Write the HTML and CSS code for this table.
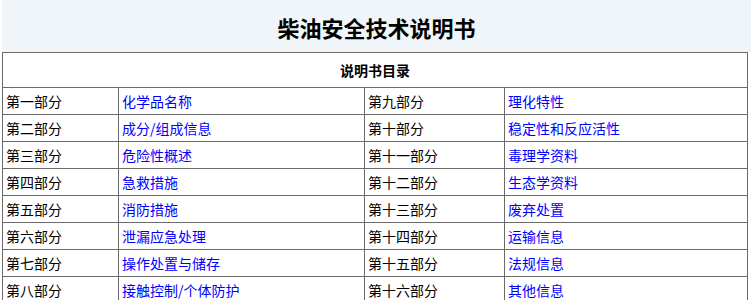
FILE: index.html
```html
<!DOCTYPE html>
<html lang="zh-CN">
<head>
<meta charset="utf-8">
<title>柴油安全技术说明书</title>
<link rel="stylesheet" href="styles.css">
</head>
<body>
<div class="page">
  <header class="title-bar">
    <h1 class="title">柴油安全技术说明书</h1>
  </header>
  <table class="toc">
    <colgroup>
      <col class="c1"><col class="c2"><col class="c3"><col class="c4">
    </colgroup>
    <tr class="toc-head"><th colspan="4">说明书目录</th></tr>
    <tr><td>第一部分</td><td><a href="#">化学品名称</a></td><td>第九部分</td><td><a href="#">理化特性</a></td></tr>
    <tr><td>第二部分</td><td><a href="#">成分/组成信息</a></td><td>第十部分</td><td><a href="#">稳定性和反应活性</a></td></tr>
    <tr><td>第三部分</td><td><a href="#">危险性概述</a></td><td>第十一部分</td><td><a href="#">毒理学资料</a></td></tr>
    <tr><td>第四部分</td><td><a href="#">急救措施</a></td><td>第十二部分</td><td><a href="#">生态学资料</a></td></tr>
    <tr><td>第五部分</td><td><a href="#">消防措施</a></td><td>第十三部分</td><td><a href="#">废弃处置</a></td></tr>
    <tr><td>第六部分</td><td><a href="#">泄漏应急处理</a></td><td>第十四部分</td><td><a href="#">运输信息</a></td></tr>
    <tr><td>第七部分</td><td><a href="#">操作处置与储存</a></td><td>第十五部分</td><td><a href="#">法规信息</a></td></tr>
    <tr><td>第八部分</td><td><a href="#">接触控制/个体防护</a></td><td>第十六部分</td><td><a href="#">其他信息</a></td></tr>
  </table>
</div>
</body>
</html>
```
FILE: styles.css
```css
html, body {
  margin: 0;
  padding: 0;
  background: #ffffff;
}
body {
  font-family: "Noto Sans CJK SC", "Noto Sans", sans-serif;
  color: #000;
}
.page {
  padding-left: 2px;
}
.title-bar {
  background: #eff5f8;
  height: 52px;
  display: flex;
  align-items: center;
  justify-content: center;
}
.title {
  margin: 0;
  font-size: 22px;
  font-weight: 700;
  line-height: 1;
  padding-top: 1px;
  color: #000;
}
.toc {
  border-collapse: collapse;
  width: 745px;
  table-layout: fixed;
  font-size: 14px;
}
.c1 { width: 116px; }
.c2 { width: 246px; }
.c3 { width: 140px; }
.c4 { width: 243px; }
.toc th, .toc td {
  border: 1px solid #6b6b6b;
  padding: 0 3px;
  text-align: left;
  line-height: 20px;
  height: 27px;
  box-sizing: border-box;
  white-space: nowrap;
  font-weight: 400;
}
.toc .toc-head th {
  text-align: center;
  height: 35px;
  font-weight: 700;
}
.toc a {
  color: #0000ff;
  text-decoration: none;
}
```
